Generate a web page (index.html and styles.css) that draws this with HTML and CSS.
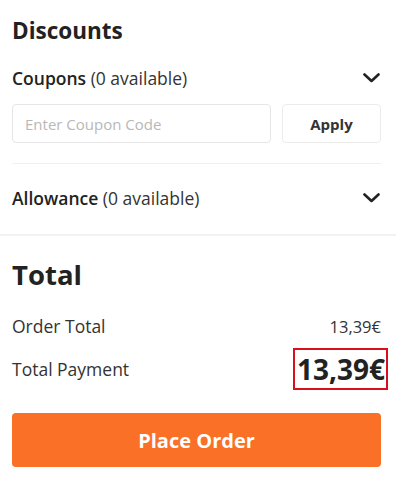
FILE: index.html
```html
<!DOCTYPE html>
<html>
<head>
<meta charset="utf-8">
<link rel="stylesheet" href="styles.css">
</head>
<body>
<div class="panel">
  <section class="discounts">
    <h2 class="title">Discounts</h2>
    <div class="row coupons">
      <span class="label"><b>Coupons</b> (0 available)</span>
      <svg class="chev" width="17" height="10" viewBox="0 0 17 10"><polyline points="1.5,1.5 8.5,8 15.5,1.5" fill="none" stroke="#222" stroke-width="2.6" stroke-linecap="round" stroke-linejoin="round"/></svg>
    </div>
    <div class="coupon-form">
      <input class="code" type="text" placeholder="Enter Coupon Code">
      <button class="apply">Apply</button>
    </div>
    <div class="sep"></div>
    <div class="row allowance">
      <span class="label"><b>Allowance</b> (0 available)</span>
      <svg class="chev" width="17" height="10" viewBox="0 0 17 10"><polyline points="1.5,1.5 8.5,8 15.5,1.5" fill="none" stroke="#222" stroke-width="2.6" stroke-linecap="round" stroke-linejoin="round"/></svg>
    </div>
  </section>
  <div class="full-sep"></div>
  <section class="total">
    <h2 class="title big">Total</h2>
    <div class="row order">
      <span>Order Total</span>
      <span class="val">13,39€</span>
    </div>
    <div class="row payment">
      <span>Total Payment</span>
      <span class="pay">13,39€</span>
    </div>
    <button class="place">Place Order</button>
  </section>
</div>
</body>
</html>
```

FILE: styles.css
```css
* { box-sizing: border-box; }
body {
  margin: 0;
  background: #fff;
  font-family: "Open Sans", "Liberation Sans", sans-serif;
  color: #333;
}
.panel { width: 396px; }
section { padding: 0 15px 0 12px; }
.discounts { padding-top: 16px; }
.title {
  margin: 0;
  font-size: 22.5px;
  line-height: 30px;
  font-weight: 700;
  color: #222;
}
.row {
  display: flex;
  justify-content: space-between;
  align-items: center;
  font-size: 17.5px;
}
.label b { font-weight: 600; color: #222; }
.coupons { margin-top: 10px; height: 44px; }
.chev { margin-right: 1px; }
.coupon-form {
  margin-top: 4px;
  display: flex;
  gap: 11px;
}
.code {
  width: 259px;
  height: 39px;
  border: 1px solid #e6e6e6;
  border-radius: 4px;
  padding: 0 12px;
  font-family: inherit;
  font-size: 15px;
  color: #333;
  outline: none;
}
.code::placeholder { color: #b8b8b8; }
.apply {
  flex: 1;
  height: 39px;
  border: 1px solid #ececec;
  border-radius: 4px;
  background: #fff;
  font-family: inherit;
  font-size: 15px;
  font-weight: 700;
  color: #333;
}
.sep { margin-top: 20px; height: 1px; background: #f0f0f0; }
.allowance { height: 64px; margin-top: 2px; }
.full-sep { margin-top: 4px; height: 2px; background: #f2f2f2; }
.big { font-size: 27.5px; line-height: 36px; margin-top: 21px; }
.order { margin-top: 21px; height: 24px; }
.val { font-size: 16.5px; }
.payment { margin-top: 10px; height: 42px; }
.pay {
  display: inline-block;
  margin-right: -7px;
  border: 2px solid #d7101c;
  padding: 0 1px 0 2px;
  font-size: 28px;
  line-height: 38px;
  font-weight: 700;
  color: #222;
}
.place {
  display: block;
  width: 100%;
  margin-top: 23px;
  height: 54px;
  border: none;
  border-radius: 4px;
  background: #f97026;
  color: #fff;
  font-family: inherit;
  font-size: 20px;
  font-weight: 700;
}
```
